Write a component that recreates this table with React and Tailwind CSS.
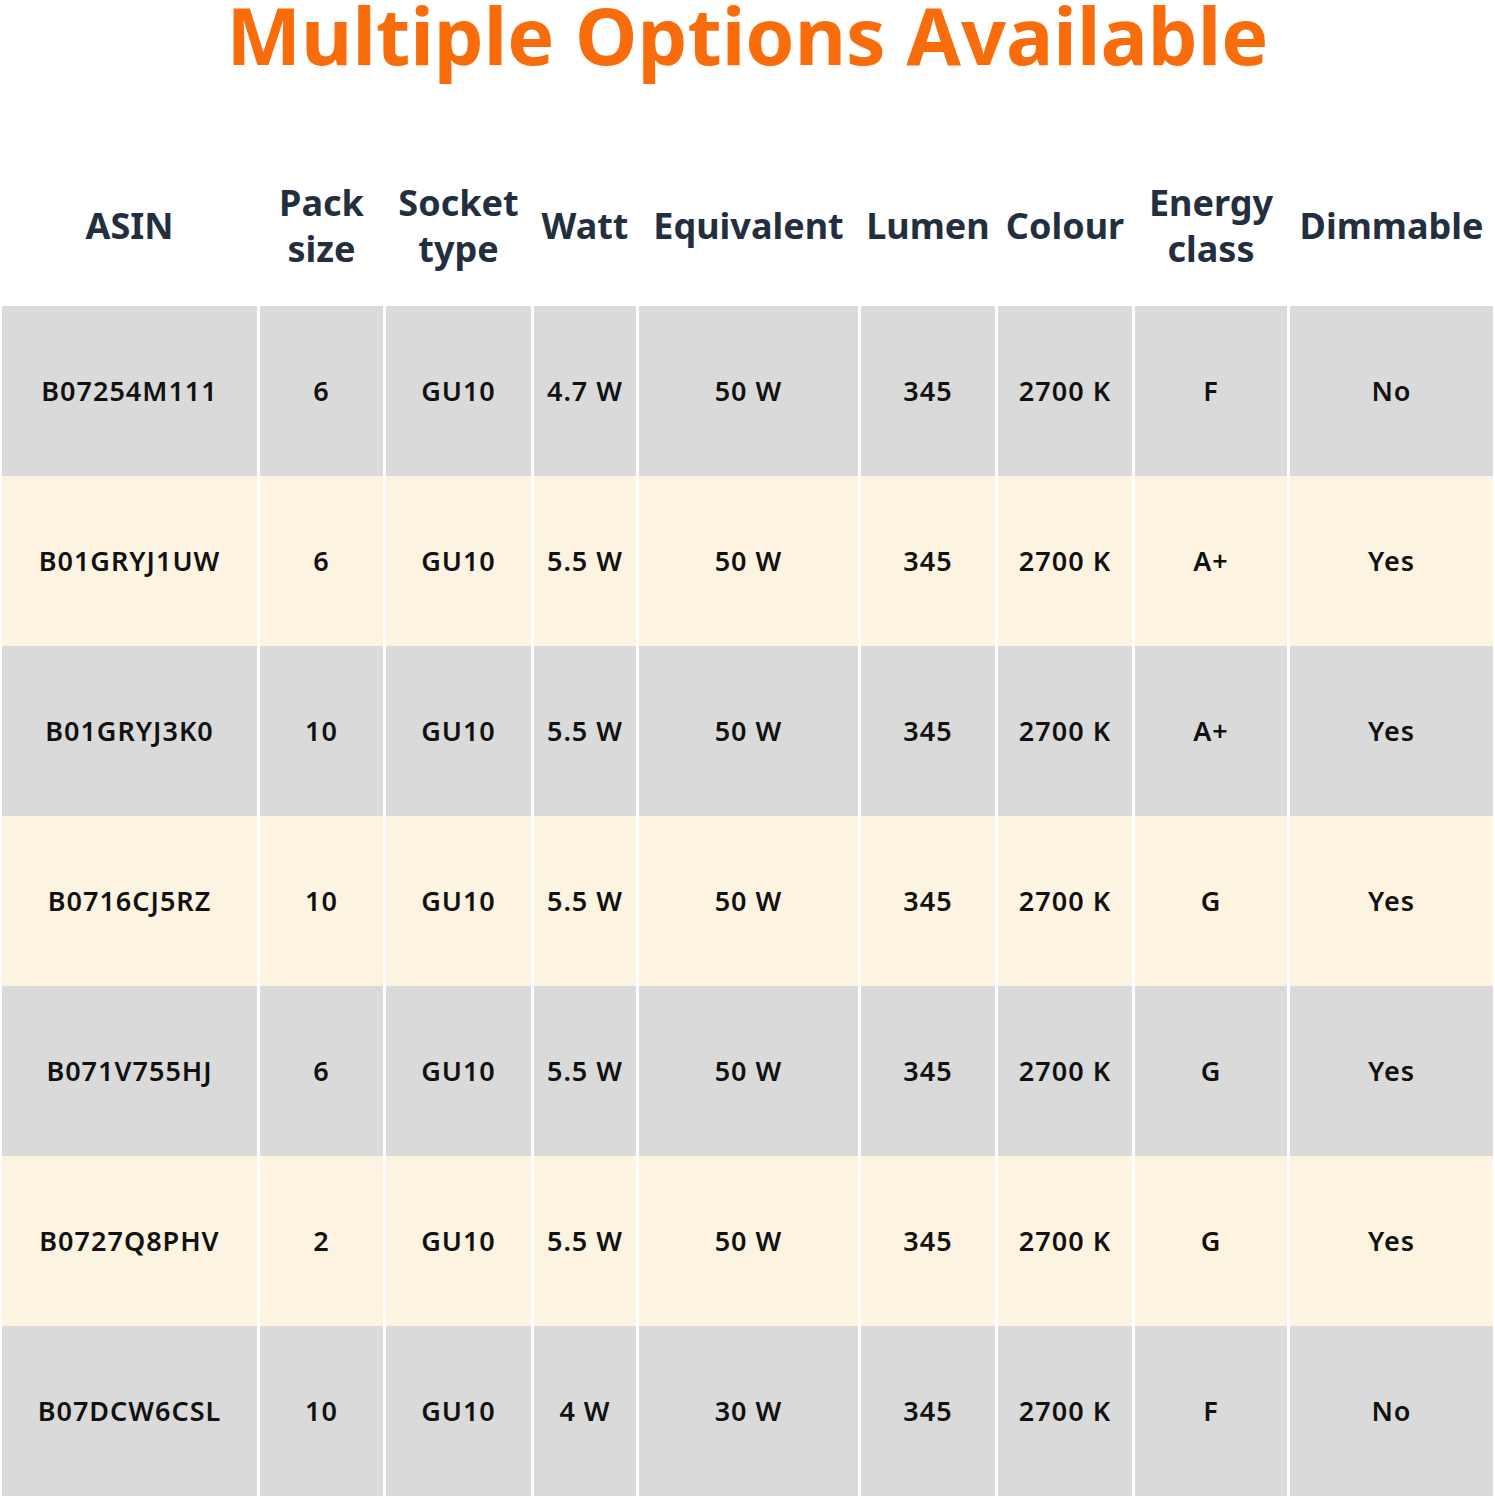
import React from 'react';

const headers = [
  ['ASIN'],
  ['Pack', 'size'],
  ['Socket', 'type'],
  ['Watt'],
  ['Equivalent'],
  ['Lumen'],
  ['Colour'],
  ['Energy', 'class'],
  ['Dimmable'],
];

const rows = [
  ['B07254M111', '6', 'GU10', '4.7 W', '50 W', '345', '2700 K', 'F', 'No'],
  ['B01GRYJ1UW', '6', 'GU10', '5.5 W', '50 W', '345', '2700 K', 'A+', 'Yes'],
  ['B01GRYJ3K0', '10', 'GU10', '5.5 W', '50 W', '345', '2700 K', 'A+', 'Yes'],
  ['B0716CJ5RZ', '10', 'GU10', '5.5 W', '50 W', '345', '2700 K', 'G', 'Yes'],
  ['B071V755HJ', '6', 'GU10', '5.5 W', '50 W', '345', '2700 K', 'G', 'Yes'],
  ['B0727Q8PHV', '2', 'GU10', '5.5 W', '50 W', '345', '2700 K', 'G', 'Yes'],
  ['B07DCW6CSL', '10', 'GU10', '4 W', '30 W', '345', '2700 K', 'F', 'No'],
];

const cols = 'grid grid-cols-[255px_123px_145px_102px_219px_134px_134px_152px_203px] gap-x-[3px]';

const App = () => {
  return (
    <div className="w-[1495px] h-[1500px] bg-white overflow-hidden" style={{ fontFamily: '"Noto Sans", "Open Sans", sans-serif' }}>
      {/* Title */}
      <div className="h-[150px]">
        <h1 className="text-center text-[#f96c0c] text-[79px] font-bold leading-[70px]">
          Multiple Options Available
        </h1>
      </div>

      {/* Header */}
      <div className={`${cols} pl-[2px] h-[156px] pb-[4px] items-center`}>
        {headers.map((h, i) => (
          <div key={i} className="text-center text-[#232f3e] text-[36px] font-bold leading-[46px]">
            {h.map((line, j) => (
              <div key={j}>{line}</div>
            ))}
          </div>
        ))}
      </div>

      {/* Rows */}
      <div className="flex flex-col">
        {rows.map((r, i) => (
          <div key={i} className={`${cols} pl-[2px] h-[170px]`}>
            {r.map((cell, j) => (
              <div
                key={j}
                className={`flex items-center justify-center text-[#111111] text-[27px] font-semibold tracking-[1px] ${i % 2 === 0 ? 'bg-[#dadada]' : 'bg-[#fdf3e1]'}`}
              >
                {cell}
              </div>
            ))}
          </div>
        ))}
      </div>
    </div>
  );
};

export default App;
